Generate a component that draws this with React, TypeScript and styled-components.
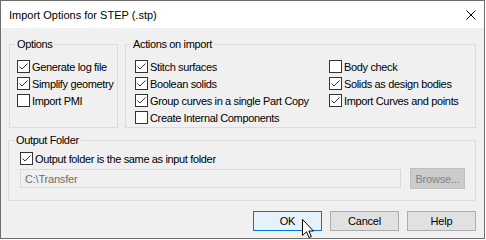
import React from "react";
import styled, { createGlobalStyle } from "styled-components";

const GlobalStyle = createGlobalStyle`
  html, body { margin: 0; padding: 0; background: #ffffff; }
  body { font-family: "Liberation Sans", Arial, sans-serif; }
  * { box-sizing: border-box; }
`;

const Window = styled.div`
  position: relative;
  width: 485px;
  height: 239px;
  border: 1px solid #6e6e6e;
  background: #f0f0f0;
  display: flex;
  flex-direction: column;
  font-size: 11px;
  color: #000;
`;

const TitleBar = styled.div`
  height: 27px;
  background: #ffffff;
  display: flex;
  align-items: center;
  justify-content: space-between;
  padding: 0 8px 0 8px;
`;

const Title = styled.div`
  font-size: 11px;
  line-height: 13px;
  padding-top: 1px;
`;

const CloseIcon = styled.svg`
  display: block;
  margin-right: 0;
`;

const Body = styled.div`
  padding: 10px 8px 0 8px;
  display: flex;
  flex-direction: column;
`;

const TopRow = styled.div`
  display: flex;
  gap: 7px;
`;

const Group = styled.fieldset<{ $width?: number; $mt?: number; $ml?: number }>`
  margin: ${(p) => p.$mt ?? 0}px 0 0 ${(p) => p.$ml ?? 0}px;
  padding: 0;
  border: 1px solid #dcdcdc;
  min-width: 0;
  ${(p) => (p.$width ? `width: ${p.$width}px; flex: none;` : "flex: 1;")}
`;

const Legend = styled.legend`
  margin-left: 5px;
  padding: 0 2px;
  font-size: 11px;
  line-height: 13px;
  letter-spacing: -0.35px;
`;

const GroupContent = styled.div<{ $pad: string }>`
  padding: ${(p) => p.$pad};
  display: flex;
`;

const Column = styled.div<{ $width?: number }>`
  display: flex;
  flex-direction: column;
  ${(p) => (p.$width ? `width: ${p.$width}px;` : "")}
`;

const Row = styled.label`
  height: 17px;
  display: flex;
  align-items: center;
  gap: 2px;
  letter-spacing: -0.35px;
  white-space: nowrap;
`;

const Box = styled.span`
  width: 13px;
  height: 13px;
  border: 1px solid #333333;
  background: #ffffff;
  flex: none;
  display: flex;
  align-items: center;
  justify-content: center;
`;

const FieldRow = styled.div`
  margin-top: 1px;
  height: 21px;
  display: flex;
  align-items: center;
  gap: 9px;
`;

const TextField = styled.div`
  width: 381px;
  height: 19px;
  border: 1px solid #d9d9d9;
  background: #f0f0f0;
  color: #6d6d6d;
  padding-left: 4px;
  display: flex;
  align-items: center;
  letter-spacing: -0.2px;
`;

const Browse = styled.div`
  width: 55px;
  height: 21px;
  border: 1px solid #bfbfbf;
  background: #cccccc;
  color: #838383;
  display: flex;
  align-items: center;
  justify-content: center;
  letter-spacing: -0.2px;
`;

const ButtonRow = styled.div`
  margin-top: 10px;
  display: flex;
  justify-content: flex-end;
  gap: 8px;
`;

const Button = styled.div<{ $primary?: boolean }>`
  width: 69px;
  height: 20px;
  border: 1px solid ${(p) => (p.$primary ? "#0078d7" : "#adadad")};
  background: ${(p) => (p.$primary ? "#e5f1fb" : "#e1e1e1")};
  display: flex;
  align-items: center;
  justify-content: center;
  letter-spacing: -0.2px;
`;

const Cursor = styled.svg`
  position: absolute;
  left: 301px;
  top: 218px;
`;

const Check = ({ checked }: { checked: boolean }) => (
  <Box>
    {checked && (
      <svg width="11" height="11" viewBox="0 0 11 11">
        <polyline points="1.5,5.5 4,8 9.5,2.5" fill="none" stroke="#333" strokeWidth="1" />
      </svg>
    )}
  </Box>
);

const Option = ({ label, checked }: { label: string; checked: boolean }) => (
  <Row>
    <Check checked={checked} />
    <span>{label}</span>
  </Row>
);

export default function App() {
  return (
    <>
      <GlobalStyle />
      <Window>
        <TitleBar>
          <Title>Import Options for STEP (.stp)</Title>
          <CloseIcon width="10" height="10" viewBox="0 0 10 10">
            <path d="M0.5 0.5 L9.5 9.5 M9.5 0.5 L0.5 9.5" stroke="#000" strokeWidth="1" fill="none" />
          </CloseIcon>
        </TitleBar>
        <Body>
          <TopRow>
            <Group $width={109}>
              <Legend>Options</Legend>
              <GroupContent $pad="7px 0 1px 7px">
                <Column>
                  <Option label="Generate log file" checked />
                  <Option label="Simplify geometry" checked />
                  <Option label="Import PMI" checked={false} />
                </Column>
              </GroupContent>
            </Group>
            <Group>
              <Legend>Actions on import</Legend>
              <GroupContent $pad="7px 0 1px 9px">
                <Column $width={194}>
                  <Option label="Stitch surfaces" checked />
                  <Option label="Boolean solids" checked />
                  <Option label="Group curves in a single Part Copy" checked />
                  <Option label="Create Internal Components" checked={false} />
                </Column>
                <Column>
                  <Option label="Body check" checked={false} />
                  <Option label="Solids as design bodies" checked />
                  <Option label="Import Curves and points" checked />
                </Column>
              </GroupContent>
            </Group>
          </TopRow>
          <Group $mt={6} $ml={-1}>
            <Legend>Output Folder</Legend>
            <GroupContent $pad="3px 9px 11px 11px">
              <Column>
                <Option label="Output folder is the same as input folder" checked />
                <FieldRow>
                  <TextField>C:\Transfer</TextField>
                  <Browse>Browse...</Browse>
                </FieldRow>
              </Column>
            </GroupContent>
          </Group>
          <ButtonRow>
            <Button $primary>OK</Button>
            <Button>Cancel</Button>
            <Button>Help</Button>
          </ButtonRow>
        </Body>
        <Cursor width="13" height="20" viewBox="0 0 13 20">
          <path
            d="M0.5 0.5 L0.5 16.5 L4.5 12.8 L7 18.5 L9.3 17.5 L6.9 12 L11.5 12 Z"
            fill="#fff"
            stroke="#000"
            strokeWidth="1"
            strokeLinejoin="miter"
          />
        </Cursor>
      </Window>
    </>
  );
}
